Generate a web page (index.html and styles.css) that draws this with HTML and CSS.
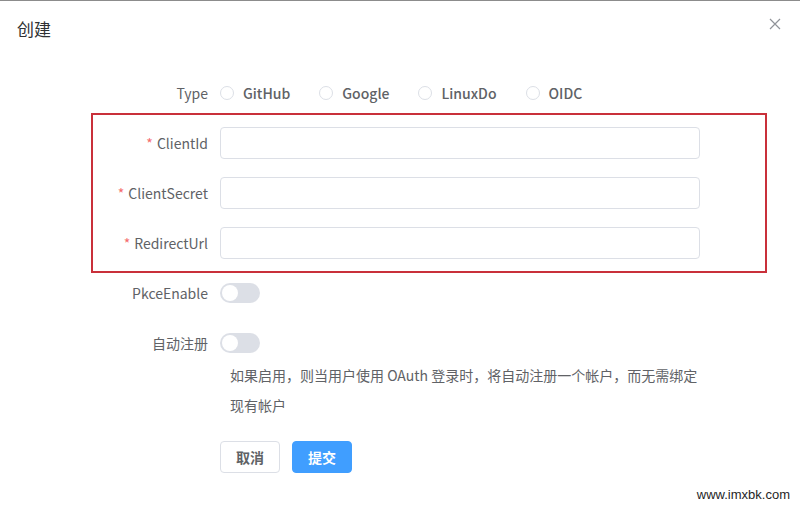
FILE: index.html
```html
<!DOCTYPE html>
<html lang="zh-CN">
<head>
    <meta charset="UTF-8">
    <meta name="viewport" content="width=device-width, initial-scale=1.0">
    <title>创建</title>
    <link rel="stylesheet" href="styles.css">
</head>
<body>
    <div class="dialog">
        <div class="dialog-header">
            <span class="dialog-title">创建</span>
            <button class="dialog-close" aria-label="关闭">
                <svg width="12" height="12" viewBox="0 0 12 12">
                    <path d="M1 1L11 11M11 1L1 11" stroke="#909399" stroke-width="1.2" fill="none"/>
                </svg>
            </button>
        </div>
        <form class="form">
            <div class="form-item">
                <label class="form-label">Type</label>
                <div class="form-content radios">
                    <label class="radio"><span class="radio-dot"></span>GitHub</label>
                    <label class="radio"><span class="radio-dot"></span>Google</label>
                    <label class="radio"><span class="radio-dot"></span>LinuxDo</label>
                    <label class="radio"><span class="radio-dot"></span>OIDC</label>
                </div>
            </div>
            <div class="marked">
                <div class="form-item">
                    <label class="form-label required">ClientId</label>
                    <div class="form-content"><input class="input" type="text"></div>
                </div>
                <div class="form-item">
                    <label class="form-label required">ClientSecret</label>
                    <div class="form-content"><input class="input" type="text"></div>
                </div>
                <div class="form-item">
                    <label class="form-label required">RedirectUrl</label>
                    <div class="form-content"><input class="input" type="text"></div>
                </div>
            </div>
            <div class="form-item">
                <label class="form-label">PkceEnable</label>
                <div class="form-content"><span class="switch"></span></div>
            </div>
            <div class="form-item compact">
                <label class="form-label">自动注册</label>
                <div class="form-content"><span class="switch"></span></div>
            </div>
            <div class="form-item help-row">
                <div class="form-label"></div>
                <p class="help">如果启用，则当用户使用 OAuth 登录时，将自动注册一个帐户，而无需绑定现有帐户</p>
            </div>
            <div class="form-item">
                <div class="form-label"></div>
                <div class="form-content actions">
                    <button type="button" class="btn">取消</button>
                    <button type="button" class="btn btn-primary">提交</button>
                </div>
            </div>
        </form>
    </div>
    <div class="watermark">www.imxbk.com</div>
</body>
</html>
```

FILE: styles.css
```css
body {
    margin: 0;
    background-color: white;
    font-family: "Noto Sans CJK SC", "Noto Sans", sans-serif;
    color: #606266;
    height: 509px;
    overflow: hidden;
    position: relative;
}
.dialog {
    border-top: 1px solid #8c8c8c;
    height: 508px;
    box-sizing: border-box;
}
.dialog-header {
    display: flex;
    justify-content: space-between;
    align-items: flex-start;
    padding: 16px 18px 0 17px;
    height: 60px;
    box-sizing: border-box;
}
.dialog-title {
    font-size: 17px;
    line-height: 24px;
    color: #303133;
}
.dialog-close {
    background: none;
    border: none;
    padding: 0;
    margin-top: 1px;
    width: 14px;
    height: 14px;
    cursor: pointer;
}
.form {
    padding-left: 88px;
    margin-top: 16px;
}
.form-item {
    display: flex;
    align-items: center;
    margin-bottom: 18px;
    min-height: 32px;
}
.form-item.compact {
    margin-bottom: 1px;
}
.form-label {
    width: 132px;
    box-sizing: border-box;
    padding-right: 12px;
    text-align: right;
    font-size: 14px;
    line-height: 32px;
    color: #606266;
    flex-shrink: 0;
}
.form-label.required::before {
    content: "*";
    color: #f56c6c;
    margin-right: 4px;
}
.form-content {
    display: flex;
    align-items: center;
    width: 480px;
}
.radios {
    font-size: 14px;
    font-weight: 500;
}
.radio {
    display: flex;
    align-items: center;
    margin-right: 29px;
    color: #606266;
}
.radio-dot {
    width: 12px;
    height: 12px;
    border: 1px solid #dcdfe6;
    border-radius: 50%;
    margin-right: 9px;
}
.marked {
    position: relative;
}
/* red frame drawn around the client credential fields */
.marked::after {
    content: "";
    position: absolute;
    left: 3px;
    top: -14px;
    width: 672px;
    height: 156px;
    border: 2px solid #c9303a;
    pointer-events: none;
}
.input {
    width: 480px;
    height: 32px;
    box-sizing: border-box;
    border: 1px solid #dcdfe6;
    border-radius: 4px;
    padding: 0 11px;
    font-size: 14px;
    outline: none;
}
.switch {
    display: inline-block;
    position: relative;
    width: 40px;
    height: 20px;
    border-radius: 10px;
    background-color: #dcdfe6;
}
.switch::after {
    content: "";
    position: absolute;
    left: 2px;
    top: 2px;
    width: 16px;
    height: 16px;
    border-radius: 50%;
    background-color: white;
}
.help {
    margin: 0;
    width: 470px;
    padding-left: 10px;
    font-size: 14px;
    line-height: 30px;
    color: #606266;
}
.help-row {
    margin-bottom: 21px;
}
.actions {
    gap: 12px;
}
.btn {
    width: 60px;
    height: 32px;
    border: 1px solid #dcdfe6;
    border-radius: 4px;
    background-color: white;
    color: #606266;
    font-family: inherit;
    font-size: 14px;
    font-weight: 600;
    cursor: pointer;
}
.btn-primary {
    background-color: #409eff;
    border-color: #409eff;
    color: white;
}
.watermark {
    position: absolute;
    right: 10px;
    bottom: 7px;
    font-family: "Liberation Sans", Arial, sans-serif;
    font-size: 13px;
    color: #1f1f1f;
}
```
